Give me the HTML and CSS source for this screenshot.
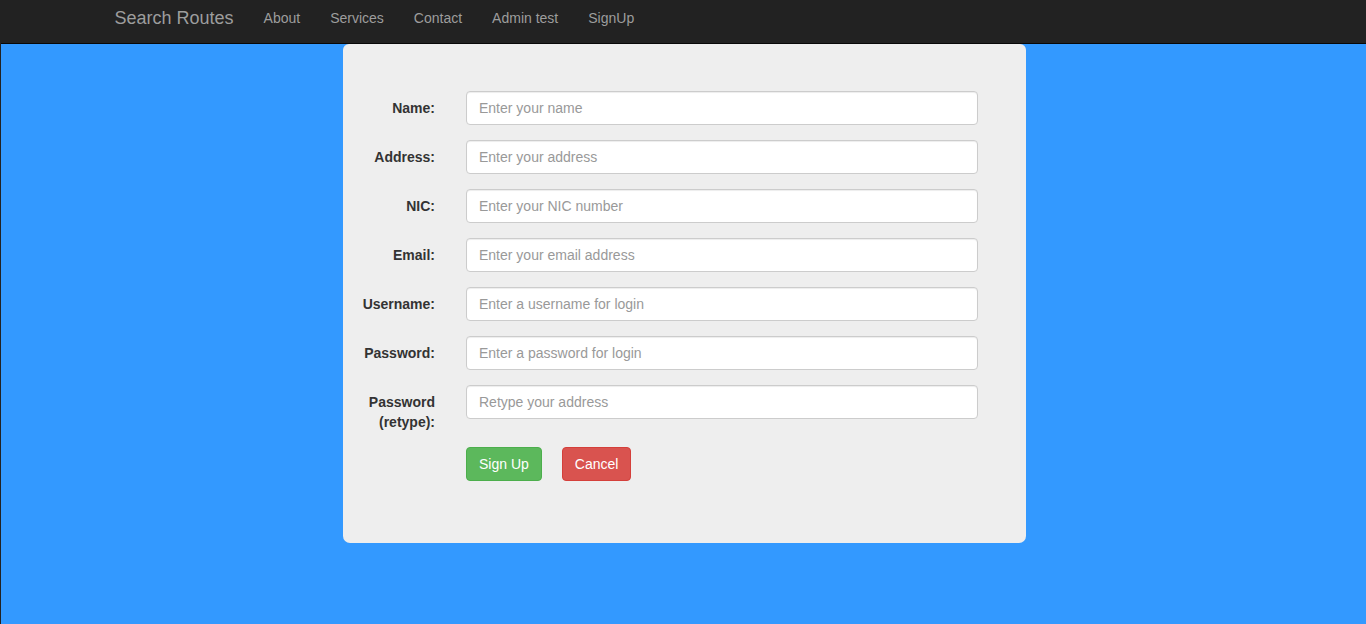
FILE: index.html
```html
<!DOCTYPE html>
<html>
<head>
<meta charset="utf-8">
<title>Sign Up</title>
<link rel="stylesheet" href="styles.css">
</head>
<body>
<div class="page">
  <nav class="navbar">
    <div class="container">
      <a class="brand" href="#">Search Routes</a>
      <ul class="nav">
        <li><a href="#">About</a></li>
        <li><a href="#">Services</a></li>
        <li><a href="#">Contact</a></li>
        <li><a href="#">Admin test</a></li>
        <li><a href="#">SignUp</a></li>
      </ul>
    </div>
  </nav>
  <main class="main">
    <form class="card">
      <div class="row"><label class="lbl">Name:</label><input class="field" type="text" placeholder="Enter your name"></div>
      <div class="row"><label class="lbl">Address:</label><input class="field" type="text" placeholder="Enter your address"></div>
      <div class="row"><label class="lbl">NIC:</label><input class="field" type="text" placeholder="Enter your NIC number"></div>
      <div class="row"><label class="lbl">Email:</label><input class="field" type="text" placeholder="Enter your email address"></div>
      <div class="row"><label class="lbl">Username:</label><input class="field" type="text" placeholder="Enter a username for login"></div>
      <div class="row"><label class="lbl">Password:</label><input class="field" type="text" placeholder="Enter a password for login"></div>
      <div class="row"><label class="lbl">Password (retype):</label><input class="field" type="text" placeholder="Retype your address"></div>
      <div class="row actions"><span></span><div class="btns"><button type="button" class="btn btn-success">Sign Up</button><button type="button" class="btn btn-danger">Cancel</button></div></div>
    </form>
  </main>
</div>
</body>
</html>
```

FILE: styles.css
```css
* { box-sizing: border-box; }
html, body { margin: 0; padding: 0; height: 100%; }
body {
  font-family: "Liberation Sans", Arial, sans-serif;
  font-size: 14px;
  line-height: 20px;
  color: #333;
  background: #3399ff;
}
.page {
  min-height: 100%;
  border-left: 1px solid #222;
  display: flex;
  flex-direction: column;
}
.navbar {
  background: #222;
  border-bottom: 1px solid #080808;
  height: 44px;
}
.container {
  width: 1170px;
  margin: 0 auto;
  display: flex;
  align-items: flex-start;
  padding-left: 0;
  position: relative;
  left: 1px;
}
.brand {
  color: #9d9d9d;
  font-size: 18px;
  line-height: 20px;
  padding: 8px 15px;
  text-decoration: none;
}
.nav {
  list-style: none;
  margin: 0;
  padding: 0;
  display: flex;
}
.nav a {
  display: block;
  color: #9d9d9d;
  text-decoration: none;
  padding: 8px 15px;
  line-height: 20px;
}
.main {
  flex: 1;
  display: flex;
  justify-content: center;
}
.card {
  width: 683px;
  margin-left: 2px;
  background: #eee;
  border-radius: 6px 6px 7px 7px;
  padding: 47px 48px 62px 15px;
  height: 499px;
}
.row {
  display: grid;
  grid-template-columns: 77px 512px;
  column-gap: 31px;
  align-items: start;
  margin-bottom: 15px;
}
.lbl {
  font-weight: bold;
  text-align: right;
  padding-top: 7px;
  line-height: 20px;
}
.field {
  display: block;
  width: 512px;
  height: 34px;
  padding: 6px 12px;
  font-family: inherit;
  font-size: 14px;
  line-height: 20px;
  color: #555;
  background: #fff;
  border: 1px solid #ccc;
  border-radius: 4px;
  box-shadow: inset 0 1px 1px rgba(0,0,0,.075);
}
.field::placeholder { color: #999; }
.actions { margin-bottom: 0; }
.btns { display: flex; gap: 20px; }
.btn {
  font-family: inherit;
  font-size: 14px;
  line-height: 20px;
  padding: 6px 12px;
  border: 1px solid transparent;
  border-radius: 4px;
  color: #fff;
  height: 34px;
}
.btn-success { background: #5cb85c; border-color: #4cae4c; }
.btn-danger { background: #d9534f; border-color: #d43f3a; }
```
